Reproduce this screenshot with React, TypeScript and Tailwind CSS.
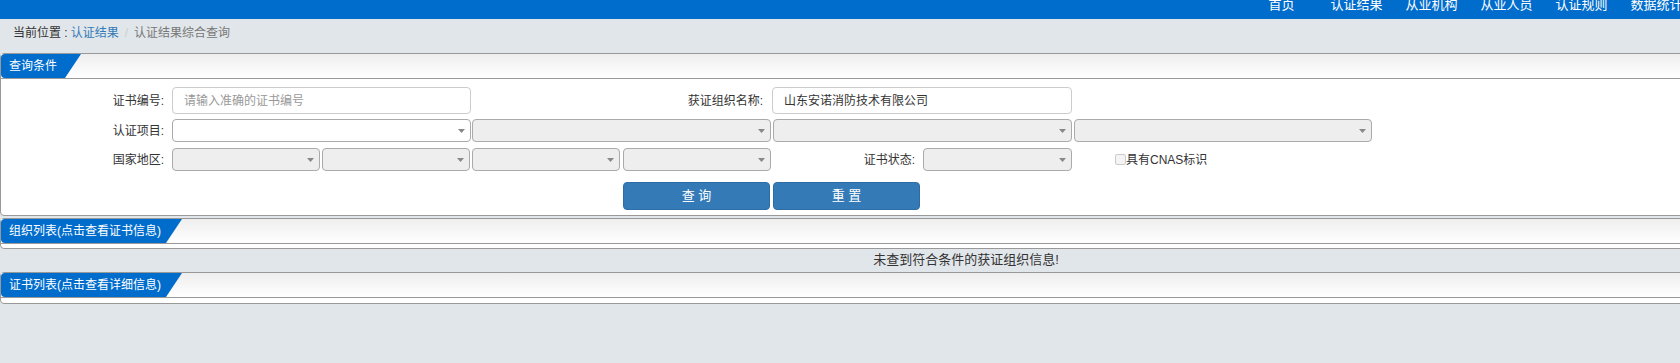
const font = "font-['Liberation_Sans','Noto_Sans_CJK_SC',sans-serif]";

const navItems = ["首页", "认证结果", "从业机构", "从业人员", "认证规则", "数据统计"];

function Arrow() {
  return (
    <svg width="7" height="4" viewBox="0 0 7 4" className="shrink-0">
      <path d="M0 0H7L3.5 4Z" fill="#888" />
    </svg>
  );
}

function FakeSelect({ className }: { className: string }) {
  return (
    <div className={`h-[23px] border border-[#aaa] rounded-[4px] flex items-center justify-end pr-[5px] ${className}`}>
      <Arrow />
    </div>
  );
}

function PanelHeader({ title, tabWidth }: { title: string; tabWidth: string }) {
  return (
    <div className="h-[25px] border-b border-[#999] bg-linear-to-b from-[#eeeeee] to-white flex">
      <div className={`h-[24px] bg-[#006dcc] rounded-l-[4px] pl-[8px] text-white text-[12px] leading-[24px] whitespace-nowrap [clip-path:polygon(0_0,100%_0,calc(100%-16px)_100%,0_100%)] ${tabWidth}`}>
        {title}
      </div>
    </div>
  );
}

export default function App() {
  return (
    <div className={`w-full h-[363px] overflow-hidden bg-[#e1e6ea] ${font}`}>
      <div className="w-[1932px]">
        {/* top nav, page is scrolled a bit so the text is clipped */}
        <div className="h-[19px] bg-[#006dcc] overflow-hidden">
          <div className="flex pl-[1244px] -mt-[3px]">
            {navItems.map((item) => (
              <div key={item} className="w-[75px] text-center text-white text-[13px] leading-[15px]">
                {item}
              </div>
            ))}
          </div>
        </div>

        {/* breadcrumb */}
        <div className="h-[34px] pt-[4px] pl-[13px] text-[12px] leading-[20px] text-[#333]">
          当前位置 :<span className="ml-[3px] text-[#337ab7]">认证结果</span>
          <span className="px-[6px] text-[#ccc]">/</span>
          <span className="text-[#777]">认证结果综合查询</span>
        </div>

        {/* query panel */}
        <div className="border border-[#999] rounded-[4px] bg-white">
          <PanelHeader title="查询条件" tabWidth="w-[80px]" />
          <div className="pt-[8px] pb-[5px] text-[12px] text-[#333]">
            <div className="flex items-center">
              <div className="w-[163px] text-right">证书编号:</div>
              <div className="ml-[8px] w-[299px] h-[27px] border border-[#ccc] rounded-[4px] pl-[11px] flex items-center text-[#999]">
                请输入准确的证书编号
              </div>
              <div className="w-[292px] text-right">获证组织名称:</div>
              <div className="ml-[9px] w-[300px] h-[27px] border border-[#ccc] rounded-[4px] pl-[11px] flex items-center text-[#333]">
                山东安诺消防技术有限公司
              </div>
            </div>

            <div className="flex items-center mt-[5px]">
              <div className="w-[163px] text-right">认证项目:</div>
              <FakeSelect className="ml-[8px] w-[299px] bg-white" />
              <FakeSelect className="ml-[1px] w-[299px] bg-[#eee]" />
              <FakeSelect className="ml-[2px] w-[299px] bg-[#eee]" />
              <FakeSelect className="ml-[2px] w-[298px] bg-[#eee]" />
            </div>

            <div className="flex items-center mt-[6px]">
              <div className="w-[163px] text-right">国家地区:</div>
              <FakeSelect className="ml-[8px] w-[148px] bg-[#eee]" />
              <FakeSelect className="ml-[2px] w-[148px] bg-[#eee]" />
              <FakeSelect className="ml-[2px] w-[148px] bg-[#eee]" />
              <FakeSelect className="ml-[3px] w-[148px] bg-[#eee]" />
              <div className="w-[144px] text-right">证书状态:</div>
              <FakeSelect className="ml-[8px] w-[149px] bg-[#eee]" />
              <div className="ml-[43px] w-[11px] h-[11px] border border-[#ccc] bg-[#f4f4f4] rounded-[2px]" />
              <div>具有CNAS标识</div>
            </div>

            <div className="flex mt-[11px] pl-[622px]">
              <div className="w-[147px] h-[28px] bg-[#337ab7] border border-[#2e6da4] rounded-[4px] flex items-center justify-center text-white text-[13px]">
                查&nbsp;询
              </div>
              <div className="ml-[3px] w-[147px] h-[28px] bg-[#337ab7] border border-[#2e6da4] rounded-[4px] flex items-center justify-center text-white text-[13px]">
                重&nbsp;置
              </div>
            </div>
          </div>
        </div>

        {/* organisation list */}
        <div className="mt-[2px] border border-[#999] rounded-[4px] bg-white">
          <PanelHeader title="组织列表(点击查看证书信息)" tabWidth="w-[181px]" />
          <div className="h-[4px]" />
        </div>
        <div className="h-[23px] leading-[21px] text-center text-[13px] text-[#333]">
          未查到符合条件的获证组织信息!
        </div>

        {/* certificate list */}
        <div className="border border-[#999] rounded-[4px] bg-white">
          <PanelHeader title="证书列表(点击查看详细信息)" tabWidth="w-[181px]" />
          <div className="h-[5px]" />
        </div>
      </div>
    </div>
  );
}
